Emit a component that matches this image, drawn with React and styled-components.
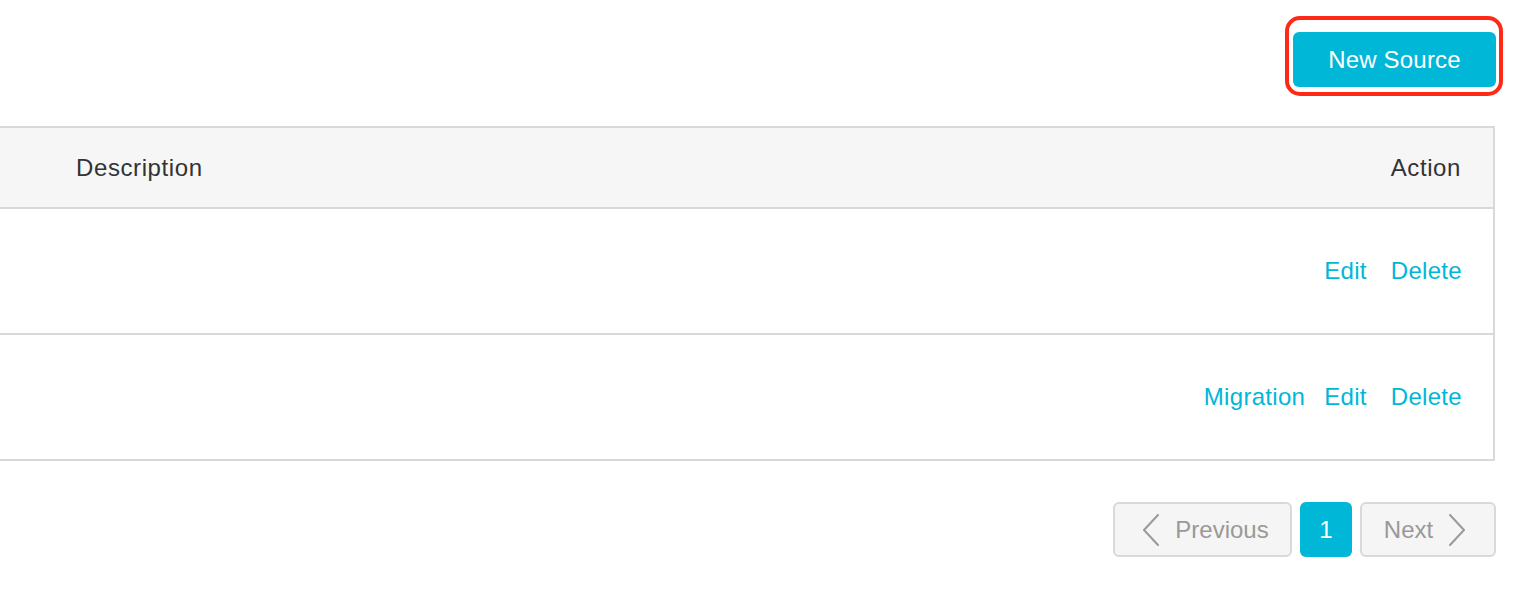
import React from "react";
import styled, { createGlobalStyle } from "styled-components";

const Global = createGlobalStyle`
  html, body { margin: 0; padding: 0; background: #fff; }
  body { font-family: "Liberation Sans", Arial, sans-serif; color: #333; }
  * { box-sizing: border-box; }
`;

const TEAL = "#00b7d8";
const LINE = "#d9d9d9";

const Page = styled.div`
  width: 1518px;
  height: 594px;
  overflow: hidden;
`;

const Toolbar = styled.div`
  height: 126px;
  display: flex;
  justify-content: flex-end;
  align-items: flex-start;
  padding-top: 16px;
  padding-right: 15px;
`;

const Highlight = styled.div`
  border: 4px solid #fe2a17;
  border-radius: 15px;
  padding: 12px 3px 5px 4px;
`;

const PrimaryButton = styled.button`
  width: 203px;
  height: 55px;
  border: none;
  border-radius: 6px;
  background: ${TEAL};
  color: #fff;
  font-family: inherit;
  font-size: 24px;
  letter-spacing: 0.2px;
  cursor: pointer;
`;

const Table = styled.div`
  width: 1495px;
  border-top: 2px solid ${LINE};
  border-right: 2px solid ${LINE};
`;

const Row = styled.div`
  display: grid;
  grid-template-columns: 1fr auto;
  align-items: center;
  height: ${(p) => (p.$head ? 81 : 126)}px;
  border-bottom: 2px solid ${LINE};
  background: ${(p) => (p.$head ? "#f6f6f6" : "#fff")};
`;

const Cell = styled.div`
  font-size: 24px;
  padding-left: ${(p) => p.$pl || 0}px;
  padding-right: ${(p) => p.$pr || 0}px;
  color: #333;
  letter-spacing: ${(p) => (p.$head ? "0.6px" : "0")};
`;

const Actions = styled.div`
  display: flex;
  justify-content: flex-end;
  align-items: center;
  padding-right: 31px;
`;

const LinkAction = styled.a`
  color: ${TEAL};
  font-size: 24px;
  margin-left: ${(p) => p.$ml || 0}px;
  cursor: pointer;
  letter-spacing: 0.3px;
`;

const Pager = styled.div`
  display: flex;
  justify-content: flex-end;
  gap: 8px;
  margin-top: 41px;
  padding-right: 22px;
`;

const PageButton = styled.button`
  height: 55px;
  width: ${(p) => p.$w}px;
  display: flex;
  align-items: center;
  justify-content: center;
  gap: ${(p) => p.$gap || 0}px;
  border-radius: 6px;
  font-family: inherit;
  font-size: 24px;
  border: ${(p) => (p.$active ? "none" : `2px solid ${LINE}`)};
  background: ${(p) => (p.$active ? TEAL : "#f5f5f5")};
  color: ${(p) => (p.$active ? "#fff" : "#999")};
  padding: 0 ${(p) => p.$pr || 0}px 0 ${(p) => p.$pl || 0}px;
  cursor: pointer;
`;

const Chevron = ({ dir }) => (
  <svg width="18" height="32" viewBox="0 0 18 32" fill="none">
    <path
      d={dir === "left" ? "M16 1 L2 16 L16 31" : "M2 1 L16 16 L2 31"}
      stroke="#9a9a9a"
      strokeWidth="2"
      strokeLinecap="round"
      strokeLinejoin="round"
    />
  </svg>
);

const rows = [
  { migration: false },
  { migration: true },
];

export default function App() {
  return (
    <Page>
      <Global />
      <Toolbar>
        <Highlight>
          <PrimaryButton>New Source</PrimaryButton>
        </Highlight>
      </Toolbar>
      <Table>
        <Row $head>
          <Cell $head $pl={76}>Description</Cell>
          <Cell $head $pr={32}>Action</Cell>
        </Row>
        {rows.map((r, i) => (
          <Row key={i}>
            <Cell $pl={76} />
            <Actions>
              {r.migration && <LinkAction>Migration</LinkAction>}
              <LinkAction $ml={r.migration ? 19 : 0}>Edit</LinkAction>
              <LinkAction $ml={24}>Delete</LinkAction>
            </Actions>
          </Row>
        ))}
      </Table>
      <Pager>
        <PageButton $w={179} $gap={15} $pl={6}>
          <Chevron dir="left" />
          <span>Previous</span>
        </PageButton>
        <PageButton $w={52} $active>1</PageButton>
        <PageButton $w={136} $gap={15} $pr={6}>
          <span>Next</span>
          <Chevron dir="right" />
        </PageButton>
      </Pager>
    </Page>
  );
}
